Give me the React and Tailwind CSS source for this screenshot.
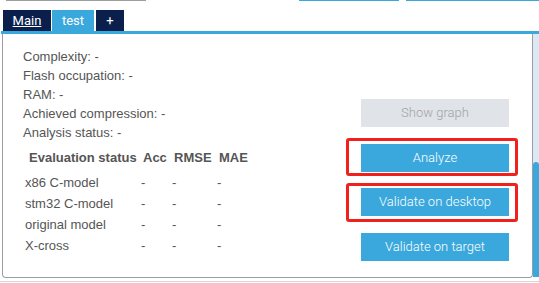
export default function App() {
  const rows = ["x86 C-model", "stm32 C-model", "original model", "X-cross"];
  return (
    <div className="relative w-[539px] h-[283px] bg-white overflow-hidden" style={{ fontFamily: "Arial, 'Liberation Sans', sans-serif" }}>
      <div className="flex h-[10px]">
        <div className="ml-[6px] w-[140px] h-[1px] bg-[#9a9ea3]" />
        <div className="ml-[153px] w-[101px] h-[1px] bg-[#3aa8dc]" />
        <div className="ml-[7px] w-[133px] h-[1px] bg-[#3aa8dc]" />
      </div>
      <div className="flex pl-[3px] gap-[1px] h-[21px] text-[13px]" style={{ fontFamily: "Roboto, sans-serif" }}>
        <div className="w-[48px] bg-[#0b1f4d] text-white flex items-center justify-center underline">Main</div>
        <div className="w-[42px] bg-[#3aa8dc] text-white flex items-center justify-center">test</div>
        <div className="ml-[1px] w-[28px] bg-[#0b1f4d] text-white flex items-center justify-center">+</div>
      </div>
      <div className="ml-[1px] h-[3px] bg-[#3aa8dc]" />
      <div className="flex">
        <div className="ml-[2px] w-[531px] h-[244px] border-l border-r border-b border-[#9a9ea3] rounded-bl-[4px] rounded-br-[4px] flex">
          <div className="w-[330px] text-[13px] text-[#555] pt-[13px]">
            <div className="pl-[20px] leading-[19px]">
              <div>Complexity: -</div>
              <div>Flash occupation: -</div>
              <div>RAM: -</div>
              <div>Achieved compression: -</div>
              <div>Analysis status: -</div>
            </div>
            <div className="pl-[22px] mt-[6px]">
              <div className="flex font-bold h-[20px] items-center pl-[4px]">
                <div className="w-[114px]">Evaluation status</div>
                <div className="w-[31px]">Acc</div>
                <div className="w-[45px]">RMSE</div>
                <div>MAE</div>
              </div>
              <div className="mt-[4px] leading-[21px]">
                {rows.map((r) => (
                  <div key={r} className="flex">
                    <div className="w-[116px]">{r}</div>
                    <div className="w-[31px]">-</div>
                    <div className="w-[45px]">-</div>
                    <div>-</div>
                  </div>
                ))}
              </div>
            </div>
          </div>
          <div className="flex flex-col pl-[28px] pt-[65px] text-[13px]" style={{ fontFamily: "Roboto, sans-serif" }}>
            <div className="w-[148px] h-[28px] bg-[#e0e3e7] text-[#9fa3a8] flex items-center justify-center font-light">Show graph</div>
            <div className="mt-[11px] -ml-[15px] w-[172px] h-[38px] border-[3px] border-[#f0201c] rounded-[3px] pl-[12px] pt-[3px]">
              <div className="w-[148px] h-[28px] bg-[#3aa8dc] text-white flex items-center justify-center font-light">Analyze</div>
            </div>
            <div className="mt-[7px] -ml-[15px] w-[172px] h-[39px] border-[3px] border-[#f0201c] rounded-[3px] pl-[12px] pt-[2px]">
              <div className="w-[148px] h-[28px] bg-[#3aa8dc] text-white flex items-center justify-center font-light">Validate on desktop</div>
            </div>
            <div className="mt-[11px] w-[148px] h-[28px] bg-[#3aa8dc] text-white flex items-center justify-center font-light">Validate on target</div>
          </div>
        </div>
        <div className="w-[6px] h-[243px] bg-[#dbe9f5] flex flex-col justify-end">
          <div className="h-[115px] bg-[#3aa8dc] rounded-t-[3px]" />
        </div>
      </div>
      <div className="mt-[3px] h-[1px] bg-[#d5d8dc]" />
    </div>
  );
}
